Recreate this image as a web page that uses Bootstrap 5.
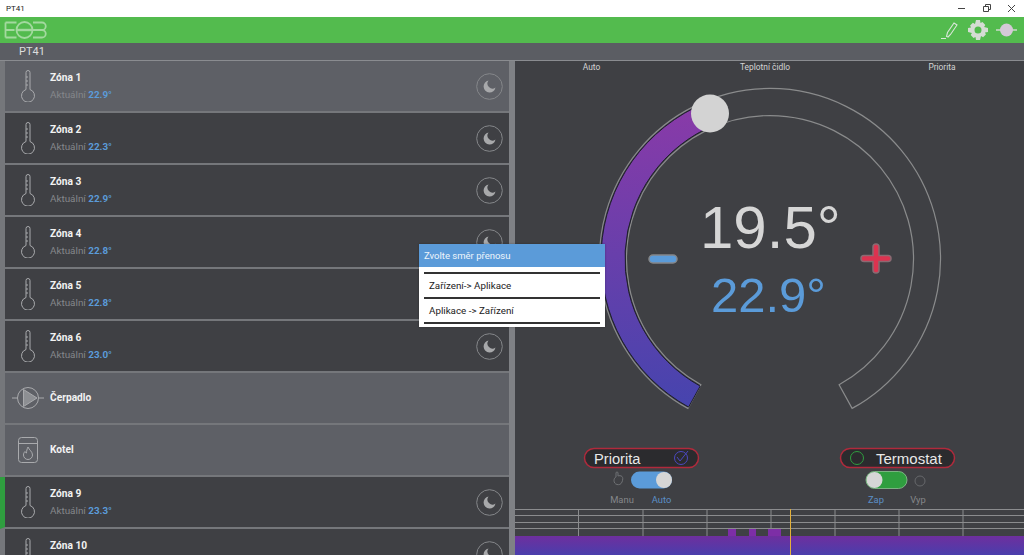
<!DOCTYPE html>
<html lang="cs">
<head>
<meta charset="utf-8">
<title>PT41</title>
<link href="https://cdn.jsdelivr.net/npm/bootstrap@5.3.0/dist/css/bootstrap.min.css" rel="stylesheet">
<style>
html,body{height:555px;overflow:hidden;background:#3f4044;}
body{font-family:Roboto,"Open Sans",sans-serif;color:#fff;}
.win-bar{height:17px;background:#fff;color:#222;font-size:8px;padding-left:6px;}
.win-ctl svg{display:block;width:25px;height:17px;}
.app-bar{height:26px;background:#53bb4e;padding:0 7px 0 4px;}
.app-bar svg{display:block;}
.sub-bar{height:18px;background:#5b5d63;border-bottom:1px solid #8a8c90;color:#ddd;font-size:11px;line-height:17px;padding-left:19px;}
.main-area{height:494px;}
.zone-col{width:515px;flex:none;background:#7f8185;padding-right:6px;}
.zone-row{height:52px;flex:none;background:#3f4044;border-bottom:2px solid #75777b;border-left:5px solid #75777b;}
.zone-row.lit{background:#5e6066;}
.zone-row.on{border-left-color:#2f9e3f;}
.zone-row>.ico{width:45px;flex:none;}
.zone-name{font-size:10.2px;font-weight:700;color:#f2f2f2;line-height:14px;}
.zone-cur{font-size:9.900px;color:#85878b;line-height:14px;margin-top:3px;}
.zone-cur b{color:#5b9bd9;font-weight:700;}
.name-only{margin-bottom:17px;}
.moon{width:27px;height:27px;margin-right:6px;flex:none;}
.panel{flex:1;background:#3f4044;position:relative;}
.gauge{position:absolute;left:0;top:0;}
.pop{position:absolute;left:419px;top:244px;width:186px;background:#fff;color:#222;z-index:5;box-shadow:0 0 2px rgba(0,0,0,.3);}
.pop-h{background:#5b9bd9;color:#eef5fb;font-size:9.500px;height:23px;line-height:23px;padding-left:5px;}
.pop-list{padding:5px 5px 3px;}
.pop-it{height:25px;border-top:2px solid #333;font-size:9.800px;line-height:24px;padding-left:5px;}
.pop-list .pop-it:last-child{height:2px;}
</style>
</head>
<body>
<svg width="0" height="0" class="d-block position-absolute">
  <defs>
    <symbol id="thermo" viewBox="0 0 14 32"><path fill="none" stroke="#a9aaad" d="M5 19.500V2.500a2 2 0 0 1 4 0V19.500a6.500 6.500 0 1 1-4 0zM5 7h2M5 11h2M5 15h2"/></symbol>
    <symbol id="moon" viewBox="0 0 27 27"><circle cx="13.500" cy="13.500" r="12.800" fill="none" stroke="#85878a"/><path d="M12.500 7.500A6 6 0 1 0 19.500 14.500 5 5 0 0 1 12.500 7.500Z" fill="#a8a9ab"/></symbol>
  </defs>
</svg>
<div class="win-bar d-flex justify-content-between align-items-center">
  <span>PT41</span>
  <div class="win-ctl d-flex">
    <svg viewBox="0 0 25 17"><path d="M9 8.500h7" stroke="#444" fill="none"/></svg>
    <svg viewBox="0 0 25 17"><path d="M9.500 6.500h5v5h-5zM11.500 6.500v-2h5v5h-2" stroke="#444" fill="none"/></svg>
    <svg viewBox="0 0 25 17"><path d="M9 5l7 7M16 5l-7 7" stroke="#444" fill="none"/></svg>
  </div>
</div>
<div class="app-bar d-flex justify-content-between align-items-center">
  <svg width="44" height="18" viewBox="0 0 44 18" fill="none" stroke="#a3d99f" stroke-width="1.800">
    <path d="M1.500 1.500h11M1.500 9h9M1.500 16.500h11M1.500 1.500v15"/>
    <circle cx="20.500" cy="9" r="8"/>
    <path d="M12.500 9h16" stroke-width="2.400"/>
    <path d="M29 1.500h9a3.700 3.700 0 0 1 0 7.500h-9m9 0a3.700 3.700 0 0 1 0 7.500h-9"/>
  </svg>
  <div class="d-flex align-items-center gap-2">
    <svg width="20" height="20" viewBox="0 0 20 20" fill="none" stroke="#d9e6d8" stroke-width="1.100"><path d="M1 18.500h5M8 17l-1.500-.500 1-4L14 3l3 2-6.500 9.500z"/></svg>
    <svg width="20" height="20" viewBox="0 0 20 20"><path fill="#d5dcd4" fill-rule="evenodd" d="M8 0h4l.5 3 2-.9 2.800 2.800-1.200 2.100 3.900.900v4l-3 .5.9 2-2.800 2.800-2.100-1.200L12 20H8l-.5-3-2 .9-2.800-2.800 1.200-2.100L0 12V8l3-.5-.9-2 2.800-2.800 2.100 1.200zM10 6.500a3.500 3.500 0 1 0 0 7 3.500 3.500 0 0 0 0-7z"/></svg>
    <svg width="21" height="14" viewBox="0 0 21 14"><path d="M0 7h21" stroke="#d5dcd4" stroke-width="1.400"/><circle cx="10.500" cy="7" r="6.500" fill="#d5c9d6"/></svg>
  </div>
</div>
<div class="sub-bar">PT41</div>
<div class="main-area d-flex">
  <div class="zone-col d-flex flex-column overflow-hidden">
    <div class="zone-row lit d-flex align-items-center"><div class="ico d-flex justify-content-center"><svg width="14" height="32"><use href="#thermo"/></svg></div><div class="flex-grow-1"><div class="zone-name">Zóna 1</div><div class="zone-cur">Aktuální <b>22.9°</b></div></div><svg class="moon"><use href="#moon"/></svg></div>
    <div class="zone-row d-flex align-items-center"><div class="ico d-flex justify-content-center"><svg width="14" height="32"><use href="#thermo"/></svg></div><div class="flex-grow-1"><div class="zone-name">Zóna 2</div><div class="zone-cur">Aktuální <b>22.3°</b></div></div><svg class="moon"><use href="#moon"/></svg></div>
    <div class="zone-row d-flex align-items-center"><div class="ico d-flex justify-content-center"><svg width="14" height="32"><use href="#thermo"/></svg></div><div class="flex-grow-1"><div class="zone-name">Zóna 3</div><div class="zone-cur">Aktuální <b>22.9°</b></div></div><svg class="moon"><use href="#moon"/></svg></div>
    <div class="zone-row d-flex align-items-center"><div class="ico d-flex justify-content-center"><svg width="14" height="32"><use href="#thermo"/></svg></div><div class="flex-grow-1"><div class="zone-name">Zóna 4</div><div class="zone-cur">Aktuální <b>22.8°</b></div></div><svg class="moon"><use href="#moon"/></svg></div>
    <div class="zone-row d-flex align-items-center"><div class="ico d-flex justify-content-center"><svg width="14" height="32"><use href="#thermo"/></svg></div><div class="flex-grow-1"><div class="zone-name">Zóna 5</div><div class="zone-cur">Aktuální <b>22.8°</b></div></div><svg class="moon"><use href="#moon"/></svg></div>
    <div class="zone-row d-flex align-items-center"><div class="ico d-flex justify-content-center"><svg width="14" height="32"><use href="#thermo"/></svg></div><div class="flex-grow-1"><div class="zone-name">Zóna 6</div><div class="zone-cur">Aktuální <b>23.0°</b></div></div><svg class="moon"><use href="#moon"/></svg></div>
    <div class="zone-row lit d-flex align-items-center"><div class="ico d-flex justify-content-center"><svg width="32" height="26" viewBox="0 0 32 26" fill="none" stroke="#a9aaad"><circle cx="16" cy="13" r="10.500"/><path d="M0 13h5.500M26.500 13H32"/><path d="M11.500 4.500v17L25 13z" fill="#8d8f93"/></svg></div><div class="flex-grow-1"><div class="zone-name">Čerpadlo</div></div></div>
    <div class="zone-row lit d-flex align-items-center"><div class="ico d-flex justify-content-center"><svg width="20" height="26" viewBox="0 0 20 26" fill="none" stroke="#a9aaad"><rect x=".5" y=".5" width="19" height="25" rx="3"/><path d="M.5 6.500h19"/><path d="M10 10c1 3 4.500 4.500 4.500 8a4.500 4.500 0 0 1-9 0c0-1.500.5-2.500 1.500-3.500.3 1 1 1.500 1.500 1.500C8.500 14 9 12 10 10z"/></svg></div><div class="flex-grow-1"><div class="zone-name">Kotel</div></div></div>
    <div class="zone-row on d-flex align-items-center"><div class="ico d-flex justify-content-center"><svg width="14" height="32"><use href="#thermo"/></svg></div><div class="flex-grow-1"><div class="zone-name">Zóna 9</div><div class="zone-cur">Aktuální <b>23.3°</b></div></div><svg class="moon"><use href="#moon"/></svg></div>
    <div class="zone-row d-flex align-items-center"><div class="ico d-flex justify-content-center"><svg width="14" height="32"><use href="#thermo"/></svg></div><div class="flex-grow-1"><div class="zone-name name-only">Zóna 10</div></div><svg class="moon"><use href="#moon"/></svg></div>
  </div>
  <div class="panel">
    <svg class="gauge" width="509" height="494" viewBox="515 61 509 494">
      <defs>
        <linearGradient id="arcg" x1="0" y1="0" x2="0" y2="1"><stop offset="0" stop-color="#8a3aa8"/><stop offset="1" stop-color="#4644ae"/></linearGradient>
        <linearGradient id="barg" x1="0" y1="0" x2="0" y2="1"><stop offset="0" stop-color="#6e2f9e"/><stop offset="1" stop-color="#4a3eac"/></linearGradient>
      </defs>
      <text x="591.500" y="69.500" font-family="Roboto" font-size="8.400" fill="#d4d4d4" text-anchor="middle">Auto</text>
      <text x="765" y="69.500" font-family="Roboto" font-size="8.400" fill="#d4d4d4" text-anchor="middle">Teplotní čidlo</text>
      <text x="942" y="69.500" font-family="Roboto" font-size="8.400" fill="#d4d4d4" text-anchor="middle">Priorita</text>
      <path d="M687.900 408.400A170.500 170.500 0 1 1 852.100 408.400L839.100 384.800A143.500 143.500 0 1 0 700.900 384.800Z" fill="none" stroke="#8a8b8c" stroke-width="1.200"/>
      <path d="M688.600 407.100A169 169 0 0 1 705.400 102.800L714.600 125A145 145 0 0 0 700.200 386.100Z" fill="url(#arcg)" stroke="#1e1e2c" stroke-width="1"/>
      <circle cx="710" cy="113.500" r="19" fill="#d3d3d3"/>
      <text x="700" y="248" font-family="Liberation Sans" font-size="60" fill="#d6d6d6">19.5°</text>
      <text x="711" y="312" font-family="Liberation Sans" font-size="49" fill="#5b9bd9">22.9°</text>
      <rect x="649" y="255" width="28" height="8" rx="4" fill="#5b9bd9" stroke="#85878a" stroke-width="1.500"/>
      <path d="M876 247v23M864 258.500h24" stroke="#8a6a72" stroke-width="7.500" stroke-linecap="round"/>
      <path d="M876 247v23M864 258.500h24" stroke="#dc3350" stroke-width="4.500" stroke-linecap="round"/>

      <rect x="584.500" y="448.500" width="114" height="19" rx="9.500" fill="#2b2b2e" stroke="#b02a3c" stroke-width="1.500"/>
      <text x="594" y="464" font-family="Liberation Sans" font-size="14.700" fill="#e8e8e8">Priorita</text>
      <circle cx="681" cy="458" r="6.500" fill="none" stroke="#4b48c0"/><path d="M677 457l3 4 8-10" fill="none" stroke="#4b48c0"/>
      <rect x="840.500" y="448.500" width="114" height="19" rx="9.500" fill="#2b2b2e" stroke="#b02a3c" stroke-width="1.500"/>
      <circle cx="857" cy="458" r="6.500" fill="none" stroke="#2f9e3f"/>
      <text x="876" y="464" font-family="Liberation Sans" font-size="15" fill="#e8e8e8">Termostat</text>

      <path d="M616 477v-4a1 1 0 0 1 2 0v3c1-.5 3-.5 4 .5 1 1 1 3 0 5.500s-3 3-5 2.500-3-2-3-4 1-3 2-3.500z" fill="none" stroke="#6f7174"/>
      <rect x="631" y="471.500" width="41" height="17" rx="8.500" fill="#5b9bd9"/>
      <circle cx="664" cy="480" r="8" fill="#d6d6d6"/>
      <rect x="866" y="471.500" width="41" height="17" rx="8.500" fill="#2f9e3f" stroke="#8cc492" stroke-width=".8"/>
      <circle cx="874.500" cy="480" r="8" fill="#d6d6d6"/>
      <circle cx="920" cy="481" r="5" fill="none" stroke="#66686b"/>
      <text x="622" y="503" font-family="Roboto" font-size="9.400" fill="#85878a" text-anchor="middle">Manu</text>
      <text x="661.500" y="503" font-family="Roboto" font-size="9.400" fill="#5b8fc6" text-anchor="middle">Auto</text>
      <text x="876" y="503" font-family="Roboto" font-size="9.400" fill="#5b8fc6" text-anchor="middle">Zap</text>
      <text x="918" y="503" font-family="Roboto" font-size="9.400" fill="#85878a" text-anchor="middle">Vyp</text>

      <g stroke="#8b8c8e" stroke-width="1">
        <path d="M515 509.500h509M515 515.500h509M515 522.500h509M515 528.500h509"/>
        <path d="M578.500 509v27M643 509v27M707 509v27M771 509v27M835 509v27M899 509v27M963 509v27"/>
      </g>
      <rect x="515" y="536" width="509" height="19" fill="url(#barg)"/>
      <path d="M728 529h8v7h-8zM749 529h7v7h-7zM768 529h13v7h-13z" fill="#7d2ea6"/>
      <path d="M790.500 509v46" stroke="#e4b13a" stroke-width="1"/>
    </svg>
  </div>
</div>
<div class="pop">
  <div class="pop-h">Zvolte směr přenosu</div>
  <div class="pop-list">
    <div class="pop-it">Zařízení-&gt; Aplikace</div>
    <div class="pop-it">Aplikace -&gt; Zařízení</div>
    <div class="pop-it"></div>
  </div>
</div>
<script src="https://cdn.jsdelivr.net/npm/bootstrap@5.3.0/dist/js/bootstrap.bundle.min.js"></script>
</body>
</html>
